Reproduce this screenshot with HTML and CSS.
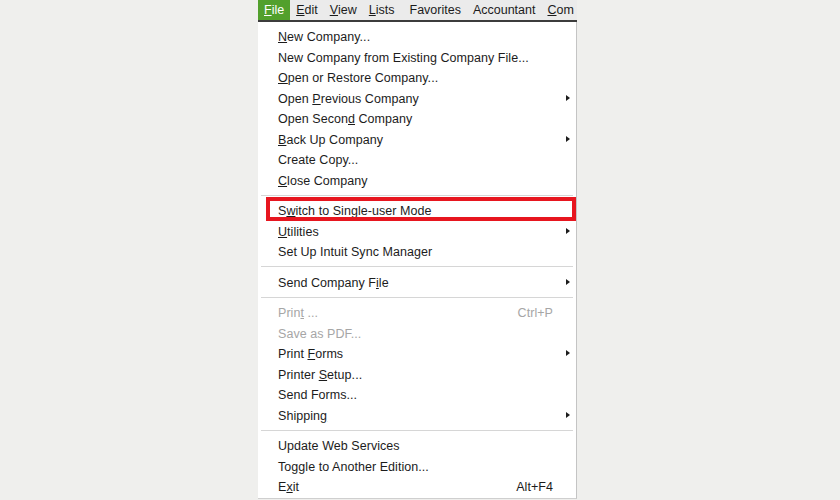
FILE: index.html
```html
<!DOCTYPE html>
<html lang="en">
  <head>
    <meta charset="utf-8" />
    <meta name="viewport" content="width=device-width, initial-scale=1.0" />
    <title>File menu</title>
    <link rel="stylesheet" href="styles.css">
  </head>

  <body>
    <div class="app">
      <nav class="menubar">
        <span class="top valgt"><u>F</u>ile</span>
        <span class="top"><u>E</u>dit</span>
        <span class="top"><u>V</u>iew</span>
        <span class="top"><u>L</u>ists</span>
        <span class="top fav">Favorites</span>
        <span class="top">Accountant</span>
        <span class="top"><u>C</u>om</span>
      </nav>

      <ul class="menu">
        <li class="item"><span class="label"><u>N</u>ew Company...</span></li>
        <li class="item"><span class="label">New Company from Existing Company File...</span></li>
        <li class="item"><span class="label"><u>O</u>pen or Restore Company...</span></li>
        <li class="item"><span class="label">Open <u>P</u>revious Company</span><span class="sub"></span></li>
        <li class="item"><span class="label">Open Secon<u>d</u> Company</span></li>
        <li class="item"><span class="label"><u>B</u>ack Up Company</span><span class="sub"></span></li>
        <li class="item"><span class="label">Create Copy...</span></li>
        <li class="item"><span class="label"><u>C</u>lose Company</span></li>
        <li class="sep"></li>
        <li class="item marked"><span class="label">S<u>w</u>itch to Single-user Mode</span></li>
        <li class="item"><span class="label"><u>U</u>tilities</span><span class="sub"></span></li>
        <li class="item"><span class="label">Set Up Intuit Sync Manager</span></li>
        <li class="sep"></li>
        <li class="item"><span class="label">Send Company F<u>i</u>le</span><span class="sub"></span></li>
        <li class="sep"></li>
        <li class="item off"><span class="label">Prin<u>t</u> ...</span><span class="key">Ctrl+P</span></li>
        <li class="item off"><span class="label">Save as PDF...</span></li>
        <li class="item"><span class="label">Print <u>F</u>orms</span><span class="sub"></span></li>
        <li class="item"><span class="label">Printer <u>S</u>etup...</span></li>
        <li class="item"><span class="label">Send Forms...</span></li>
        <li class="item"><span class="label">Shippin<u>g</u></span><span class="sub"></span></li>
        <li class="sep"></li>
        <li class="item"><span class="label">Update Web Services</span></li>
        <li class="item"><span class="label">Toggle to Another Edition...</span></li>
        <li class="item"><span class="label">E<u>x</u>it</span><span class="key">Alt+F4</span></li>
      </ul>
    </div>
  </body>
</html>
```

FILE: styles.css
```css
* {
  box-sizing: border-box;
  margin: 0;
  padding: 0;
}

body {
  background-color: #efefed;
  font-family: "Liberation Sans", Arial, sans-serif;
  font-size: 12.5px;
  color: #1c1c1c;
}

u {
  text-underline-offset: 1px;
}

.app {
  width: 319px;
  margin-left: 258px;
}

/* top bar */
.menubar {
  display: flex;
  height: 22px;
  background-color: #ebebeb;
  border-bottom: 2px solid #3c3c3c;
  overflow: hidden;
  white-space: nowrap;
}

.top {
  display: flex;
  align-items: center;
  padding: 0 6px;
  height: 20px;
  flex-shrink: 0;
}

.fav {
  margin-left: 3px;
}

.valgt {
  background-color: #52a02c;
  color: #fff;
}

/* drop down */
.menu {
  list-style: none;
  background-color: #fff;
  border-right: 1px solid #c4c4c4;
  border-bottom: 1px solid #cfcfcf;
  padding: 4px 0 1.5px;
  letter-spacing: 0.05px;
}

.item {
  display: flex;
  align-items: center;
  height: 20.5px;
  padding: 2px 6px 0 20px;
  white-space: nowrap;
}

.label {
  flex: 1;
}

.key {
  margin-right: 17px;
}

.off {
  color: #a6a6a6;
}

.sub {
  width: 0;
  height: 0;
  margin-top: -2px;
  border-left: 4px solid #1c1c1c;
  border-top: 3.5px solid transparent;
  border-bottom: 3.5px solid transparent;
}

.sep {
  height: 10px;
  display: flex;
  align-items: center;
  padding: 0 3px;
}

.sep::before {
  content: "";
  flex: 1;
  height: 1px;
  background-color: #d6d6d6;
}

/* red marking round the item */
.marked {
  position: relative;
}

.marked::after {
  content: "";
  position: absolute;
  top: -3px;
  bottom: 0;
  left: 8px;
  right: 0;
  border: 4px solid #e7161f;
}
```
